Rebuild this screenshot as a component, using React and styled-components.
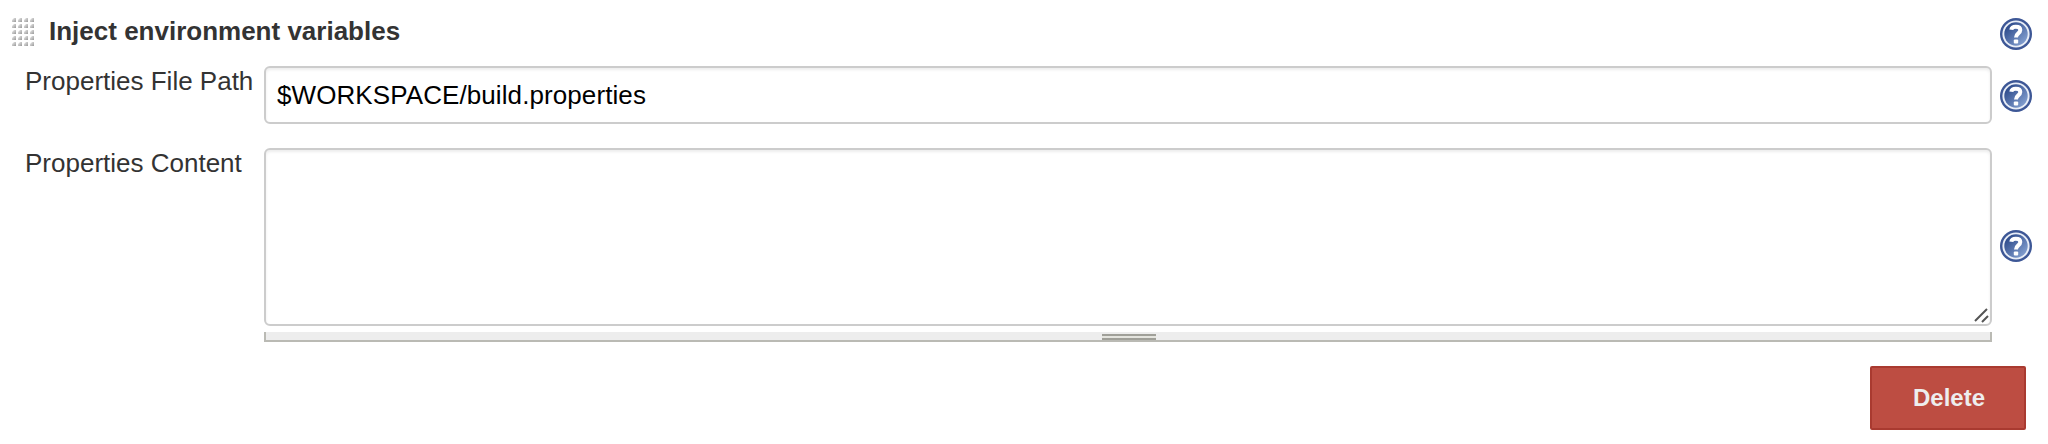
import React from "react";
import styled, { createGlobalStyle } from "styled-components";

const GlobalStyle = createGlobalStyle`
  * { box-sizing: border-box; }
  body {
    margin: 0;
    background: #fff;
    color: #333;
    font: 26px/30px "Liberation Sans", Helvetica, Arial, sans-serif;
  }
`;

const Builder = styled.section`
  width: 2048px;
  height: 444px;
  padding: 16px 16px 0 12px;
`;

const Header = styled.header`
  display: flex;
  align-items: flex-start;
  height: 50px;
`;

const Grip = styled.svg`
  display: block;
  width: 22px;
  height: 28px;
  margin: 2px 15px 0 0;
`;

const Title = styled.h2`
  margin: 0;
  flex: 1;
  font-size: 26px;
  line-height: 30px;
`;

const Row = styled.div`
  display: grid;
  grid-template-columns: 244px 1728px 32px;
  column-gap: 8px;
  margin-bottom: 24px;
`;

const Label = styled.label`
  padding-left: 13px;
  white-space: nowrap;
`;

const Control = styled.div`
  width: 1728px;
`;

const fieldStyle = `
  display: block;
  width: 100%;
  margin: 0;
  border: 2px solid #ccc;
  border-radius: 6px;
  background: #fff;
  box-shadow: inset 0 2px 3px rgba(0, 0, 0, 0.075);
  color: #000;
  font: inherit;
  outline: none;
`;

const TextInput = styled.input`
  ${fieldStyle}
  height: 58px;
  padding: 0 11px;
  letter-spacing: 0.09px;
`;

const TextArea = styled.textarea`
  ${fieldStyle}
  height: 178px;
  padding: 11px;
  resize: none;
`;

const AreaFrame = styled.div`
  position: relative;
`;

const ResizeCorner = styled.svg`
  position: absolute;
  right: 2px;
  bottom: 2px;
  width: 16px;
  height: 16px;
`;

const ResizeBar = styled.div`
  display: flex;
  justify-content: center;
  height: 10px;
  margin-top: 6px;
  padding: 2px 0 0 2px;
  border: solid #babab4;
  border-width: 0 2px 2px;
  background: #ededed;
`;

const ResizeHandle = styled.div`
  width: 54px;
  height: 6px;
  border: solid #a0a099;
  border-width: 2px 0;
  background: #e4e4de;
`;

const HelpButton = styled.a`
  display: block;
  width: 32px;
  height: 32px;
  margin-top: ${(p) => p.$top || 0}px;
`;

const Actions = styled.footer`
  display: flex;
  justify-content: flex-end;
  padding-right: 6px;
`;

const DeleteButton = styled.button`
  width: 156px;
  height: 64px;
  padding: 0 0 0 2px;
  border: 2px solid #a93a30;
  border-radius: 2px;
  background: #bd4d42;
  color: #eee;
  font: bold 24px/28px "Liberation Sans", Helvetica, Arial, sans-serif;
`;

function DragGrip() {
  const dots = [];
  for (let y = 0; y < 5; y++) {
    for (let x = 0; x < 4; x++) {
      dots.push(
        <path key={`${x}-${y}`} fill="url(#dot)" d={`M${x * 6 + 2} ${y * 6}h2v4h-4v-2z`} />
      );
    }
  }
  return (
    <Grip viewBox="0 0 22 28">
      <defs>
        <linearGradient id="dot" x1="0" y1="0" x2="1" y2="1">
          <stop offset="0" stopColor="#eee" />
          <stop offset="1" stopColor="#999" />
        </linearGradient>
      </defs>
      {dots}
    </Grip>
  );
}

function Help({ top, id }) {
  return (
    <HelpButton $top={top}>
      <svg width="32" height="32" viewBox="0 0 32 32">
        <defs>
          <linearGradient id={id} x1="0" y1="0" x2="1" y2="1">
            <stop offset="0.15" stopColor="#2f4c8c" />
            <stop offset="0.85" stopColor="#809ccd" />
          </linearGradient>
        </defs>
        <circle cx="16" cy="16" r="16" fill="#3d5796" />
        <circle cx="16" cy="16" r="13.6" fill="#e9eef7" />
        <circle cx="16" cy="16" r="11.7" fill={`url(#${id})`} />
        <path d="M11.3 11.8C11.6 9.6 13.4 8.8 15.8 8.8c2.7 0 4.5 1.2 4.5 3.3 0 3.5-4.3 3.2-4.3 7.3" fill="none" stroke="#fff" strokeWidth="4" />
        <rect x="13.8" y="21.4" width="4.4" height="4.2" rx="1" fill="#fff" />
      </svg>
    </HelpButton>
  );
}

export default function App() {
  return (
    <>
      <GlobalStyle />
      <Builder>
        <Header>
          <DragGrip />
          <Title>Inject environment variables</Title>
          <Help id="help-step" top={2} />
        </Header>
        <Row>
          <Label htmlFor="path">Properties File Path</Label>
          <Control>
            <TextInput id="path" defaultValue="$WORKSPACE/build.properties" />
          </Control>
          <Help id="help-path" top={14} />
        </Row>
        <Row>
          <Label htmlFor="content">Properties Content</Label>
          <Control>
            <AreaFrame>
              <TextArea id="content" />
              <ResizeCorner viewBox="0 0 16 16">
                <path d="M1 13 13 1M8 14l6-6" stroke="#555" strokeWidth="2" />
              </ResizeCorner>
            </AreaFrame>
            <ResizeBar>
              <ResizeHandle />
            </ResizeBar>
          </Control>
          <Help id="help-content" top={82} />
        </Row>
        <Actions>
          <DeleteButton type="button">Delete</DeleteButton>
        </Actions>
      </Builder>
    </>
  );
}
